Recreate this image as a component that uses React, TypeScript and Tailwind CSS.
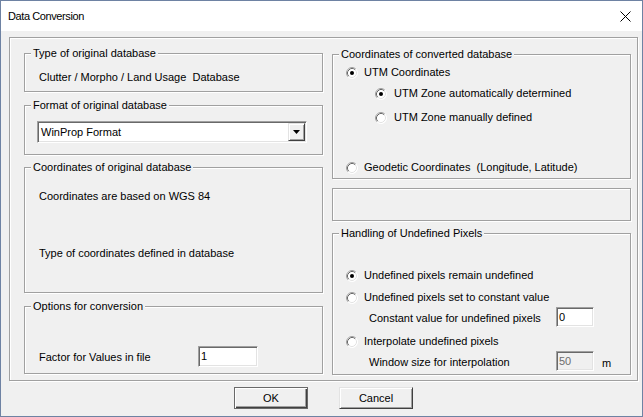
import React from "react";

function Radio({ checked }: { checked?: boolean }) {
  return (
    <svg width="12" height="12" viewBox="0 0 12 12" className="shrink-0">
      <circle cx="6" cy="6" r="5.5" fill="#fff" />
      <path d="M2.11 9.89 A5.5 5.5 0 0 1 9.89 2.11" stroke="#a0a0a0" fill="none" />
      <path d="M2.82 9.18 A4.5 4.5 0 0 1 9.18 2.82" stroke="#696969" fill="none" />
      <path d="M9.89 2.11 A5.5 5.5 0 0 1 2.11 9.89" stroke="#ffffff" fill="none" />
      <path d="M9.18 2.82 A4.5 4.5 0 0 1 2.82 9.18" stroke="#e3e3e3" fill="none" />
      {checked && <circle cx="6" cy="6" r="2" fill="#000" />}
    </svg>
  );
}

function Group({
  title,
  className,
  children,
}: {
  title?: string;
  className: string;
  children?: React.ReactNode;
}) {
  return (
    <div
      className={
        "relative border border-[#a0a0a0] shadow-[1px_1px_0_#fff,inset_1px_1px_0_#fff] " +
        className
      }
    >
      {title && (
        <div className="absolute -top-[7px] left-[6px] px-[2px] bg-[#f0f0f0] leading-[13px] whitespace-nowrap">
          {title}
        </div>
      )}
      {children}
    </div>
  );
}

function Input({
  value,
  className,
  disabled,
}: {
  value: string;
  className: string;
  disabled?: boolean;
}) {
  return (
    <div
      className={
        "flex items-center pl-[2px] border border-t-[#a0a0a0] border-l-[#a0a0a0] border-r-white border-b-white shadow-[inset_1px_1px_0_#696969,inset_-1px_-1px_0_#e3e3e3] leading-[13px] " +
        (disabled ? "bg-[#f0f0f0] text-[#6d6d6d] " : "bg-white ") +
        className
      }
    >
      {value}
    </div>
  );
}

function Row({
  className,
  children,
}: {
  className: string;
  children: React.ReactNode;
}) {
  return <div className={"flex items-center h-[13px] leading-[13px] " + className}>{children}</div>;
}

export default function App() {
  return (
    <div className="w-[643px] h-[417px] bg-[#f0f0f0] border border-[#6e82a3] flex flex-col font-['Liberation_Sans',Arial,sans-serif] text-[11px] text-black overflow-hidden">
      {/* title bar */}
      <div className="h-[30px] bg-white flex items-center justify-between pl-[7px] pr-[11px] shrink-0">
        <span className="text-[11px] tracking-[-0.4px]">Data Conversion</span>
        <svg width="11" height="11" viewBox="0 0 11 11">
          <path d="M0.5 0.5 L10.5 10.5 M10.5 0.5 L0.5 10.5" stroke="#000" strokeWidth="1" />
        </svg>
      </div>

      {/* outer frame */}
      <div className="mt-[6px] ml-[8px] w-[629px] h-[344px] border border-[#a0a0a0] shadow-[1px_1px_0_#fff,inset_1px_1px_0_#fff] pt-[15px] pl-[14px] flex gap-[9px] shrink-0">
        {/* left column */}
        <div className="w-[299px] flex flex-col">
          <Group title="Type of original database" className="h-[39px] pt-[17px] pl-[14px]">
            <div className="leading-[13px] whitespace-pre">Clutter / Morpho / Land Usage  Database</div>
          </Group>

          <Group title="Format of original database" className="mt-[13px] h-[50px] pt-[15px] pl-[12px]">
            <div className="w-[270px] h-[22px] flex items-center border border-t-[#a0a0a0] border-l-[#a0a0a0] border-r-white border-b-white shadow-[inset_1px_1px_0_#696969,inset_-1px_-1px_0_#e3e3e3] bg-white p-[1px]">
              <div className="flex-1 pl-[2px] leading-[13px]">WinProp Format</div>
              <div className="w-[17px] h-[18px] flex items-center justify-center bg-[#f0f0f0] border border-t-[#e3e3e3] border-l-[#e3e3e3] border-r-[#404040] border-b-[#404040] shadow-[inset_1px_1px_0_#fff,inset_-1px_-1px_0_#a0a0a0]">
                <svg width="7" height="4" viewBox="0 0 7 4">
                  <path d="M0 0 H7 L3.5 4 Z" fill="#000" />
                </svg>
              </div>
            </div>
          </Group>

          <Group title="Coordinates of original database" className="mt-[12px] h-[126px] pt-[22px] pl-[14px]">
            <div className="leading-[13px]">Coordinates are based on WGS 84</div>
            <div className="leading-[13px] mt-[44px]">Type of coordinates defined in database</div>
          </Group>

          <Group title="Options for conversion" className="mt-[13px] h-[68px] pt-[39px] pl-[14px]">
            <div className="flex items-center">
              <div className="w-[159px] leading-[13px] pt-[1px]">Factor for Values in file</div>
              <Input value="1" className="w-[60px] h-[21px]" />
            </div>
          </Group>
        </div>

        {/* right column */}
        <div className="w-[299px] flex flex-col">
          <Group title="Coordinates of converted database" className="mt-[1px] h-[125px] pt-[11px] pl-[13px]">
            <Row className="gap-[6px]">
              <Radio checked />
              <span>UTM Coordinates</span>
            </Row>
            <Row className="mt-[8px] pl-[29px] gap-[7px]">
              <Radio checked />
              <span>UTM Zone automatically determined</span>
            </Row>
            <Row className="mt-[11px] pl-[29px] gap-[7px]">
              <Radio />
              <span>UTM Zone manually defined</span>
            </Row>
            <Row className="mt-[37px] gap-[6px]">
              <Radio />
              <span className="whitespace-pre">Geodetic Coordinates  (Longitude, Latitude)</span>
            </Row>
          </Group>

          <Group className="mt-[9px] h-[33px]" />

          <Group title="Handling of Undefined Pixels" className="mt-[12px] h-[142px] pt-[35px] pl-[13px]">
            <Row className="gap-[6px]">
              <Radio checked />
              <span>Undefined pixels remain undefined</span>
            </Row>
            <Row className="mt-[9px] gap-[6px]">
              <Radio />
              <span>Undefined pixels set to constant value</span>
            </Row>
            <div className="mt-[3px] pl-[23px] flex items-center">
              <div className="w-[187px] leading-[13px] pt-[2px]">Constant value for undefined pixels</div>
              <Input value="0" className="w-[38px] h-[20px]" />
            </div>
            <Row className="mt-[8px] gap-[6px]">
              <Radio />
              <span>Interpolate undefined pixels</span>
            </Row>
            <div className="mt-[3px] pl-[23px] flex items-center">
              <div className="w-[187px] leading-[13px] pt-[2px]">Window size for interpolation</div>
              <Input value="50" disabled className="w-[38px] h-[20px]" />
              <span className="ml-[8px] leading-[13px] pt-[4px]">m</span>
            </div>
          </Group>
        </div>
      </div>

      {/* buttons */}
      <div className="mt-[6px] ml-[233px] flex gap-[31px]">
        <div className="w-[74px] h-[22px] flex items-center justify-center border border-[#696969] shadow-[inset_1px_1px_0_#fff,inset_-1px_-1px_0_#404040,inset_-2px_-2px_0_#a0a0a0] bg-[#f0f0f0] leading-[13px]">
          OK
        </div>
        <div className="w-[74px] h-[22px] flex items-center justify-center border border-t-[#e3e3e3] border-l-[#e3e3e3] border-r-[#404040] border-b-[#404040] shadow-[inset_1px_1px_0_#fff,inset_-1px_-1px_0_#a0a0a0] bg-[#f0f0f0] leading-[13px]">
          Cancel
        </div>
      </div>
    </div>
  );
}
